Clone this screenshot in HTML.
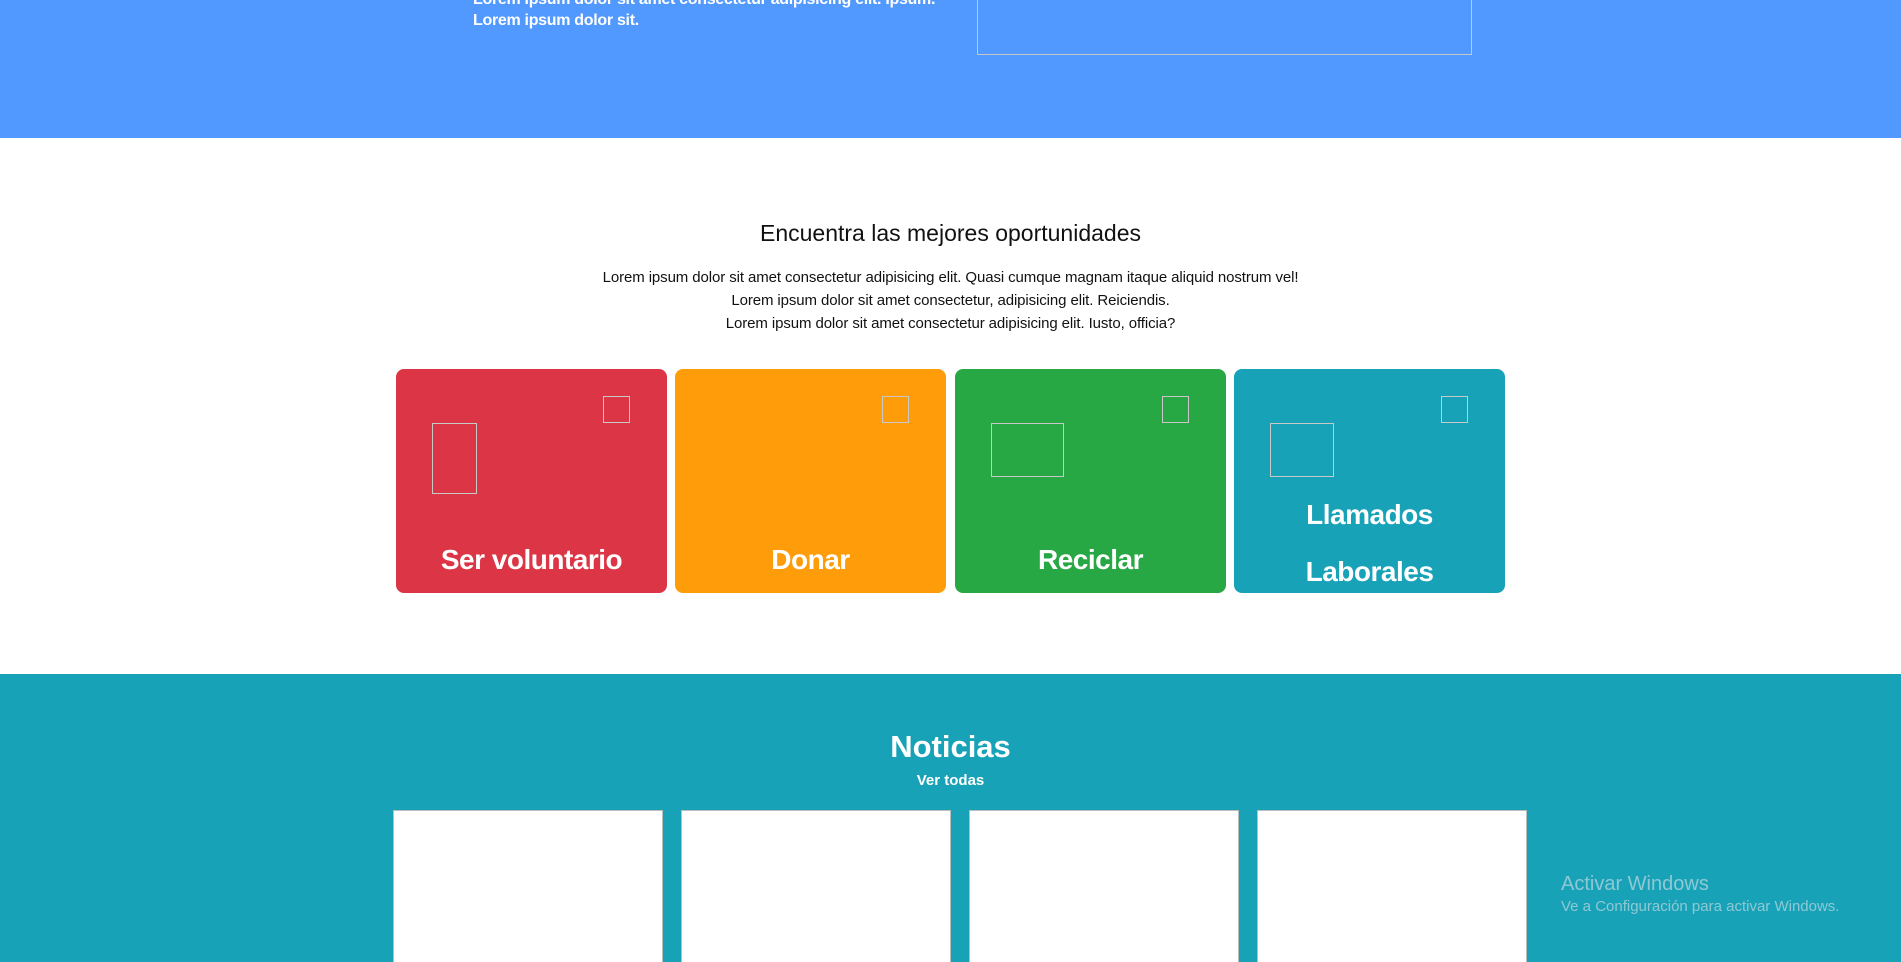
<!DOCTYPE html>
<html><head><meta charset="utf-8"><style>
*{margin:0;padding:0;box-sizing:border-box}
html,body{width:1901px;height:962px;overflow:hidden}
body{font-family:"Liberation Sans",sans-serif;background:#fff;position:relative}
.abs{position:absolute}
.hero{left:0;top:0;width:1901px;height:138px;background:#5299ff}
.ht{left:473px;color:#fff;font-weight:bold;font-size:16px;white-space:nowrap;letter-spacing:-0.3px}
.box{left:977px;top:-2px;width:495px;height:57px;border:1px solid #c8c8c8;border-top:none}
h2{position:absolute;left:0;width:1901px;text-align:center;font-weight:normal}
.p{left:0;width:1901px;text-align:center;font-size:15px;line-height:23px;top:266px;color:#111;letter-spacing:-0.1px}
.card{top:369px;width:271px;height:224px;border-radius:8px;color:#fff;overflow:hidden}
.sm{position:absolute;left:207px;top:27px;width:27px;height:27px;border:1px solid #c9c9c9}
.big{position:absolute;border:1px solid #c9c9c9}
.ct{position:absolute;left:0;width:271px;text-align:center;font-size:28px;font-weight:bold;letter-spacing:-0.5px}
.teal{left:0;top:674px;width:1901px;height:288px;background:#18a2b8}
.nc{top:810px;width:270px;height:160px;background:#fff;border:1px solid #bbb}
</style></head><body>
<div class="abs hero"></div>
<div class="abs ht" style="top:-9px">Lorem ipsum dolor sit amet consectetur adipisicing elit. Ipsum.</div>
<div class="abs ht" style="top:12px">Lorem ipsum dolor sit.</div>
<div class="abs box"></div>
<h2 style="top:220px;font-size:23px;color:#111">Encuentra las mejores oportunidades</h2>
<div class="abs p">Lorem ipsum dolor sit amet consectetur adipisicing elit. Quasi cumque magnam itaque aliquid nostrum vel!<br>Lorem ipsum dolor sit amet consectetur, adipisicing elit. Reiciendis.<br>Lorem ipsum dolor sit amet consectetur adipisicing elit. Iusto, officia?</div>
<div class="abs card" style="left:396px;background:#dc3545"><div class="sm"></div><div class="big" style="left:36px;top:54px;width:45px;height:71px"></div><div class="ct" style="top:175px">Ser voluntario</div></div>
<div class="abs card" style="left:675px;background:#ff9c0a"><div class="sm"></div><div class="ct" style="top:175px">Donar</div></div>
<div class="abs card" style="left:955px;background:#28a745"><div class="sm"></div><div class="big" style="left:36px;top:54px;width:73px;height:54px"></div><div class="ct" style="top:175px">Reciclar</div></div>
<div class="abs card" style="left:1234px;background:#18a2b8"><div class="sm"></div><div class="big" style="left:36px;top:54px;width:64px;height:54px"></div><div class="ct" style="top:117px;line-height:57px">Llamados<br>Laborales</div></div>
<div class="abs teal"></div>
<h2 style="top:729px;font-size:31px;color:#fff;font-weight:bold">Noticias</h2>
<h2 style="top:772px;font-size:15px;color:#fff;font-weight:bold">Ver todas</h2>
<div class="abs nc" style="left:393px"></div>
<div class="abs nc" style="left:681px"></div>
<div class="abs nc" style="left:969px"></div>
<div class="abs nc" style="left:1257px"></div>
<div class="abs" style="left:1561px;top:873px;color:rgba(220,225,230,.6);font-size:20px">Activar Windows</div>
<div class="abs" style="left:1561px;top:898px;color:rgba(220,225,230,.6);font-size:15px">Ve a Configuración para activar Windows.</div>
</body></html>
